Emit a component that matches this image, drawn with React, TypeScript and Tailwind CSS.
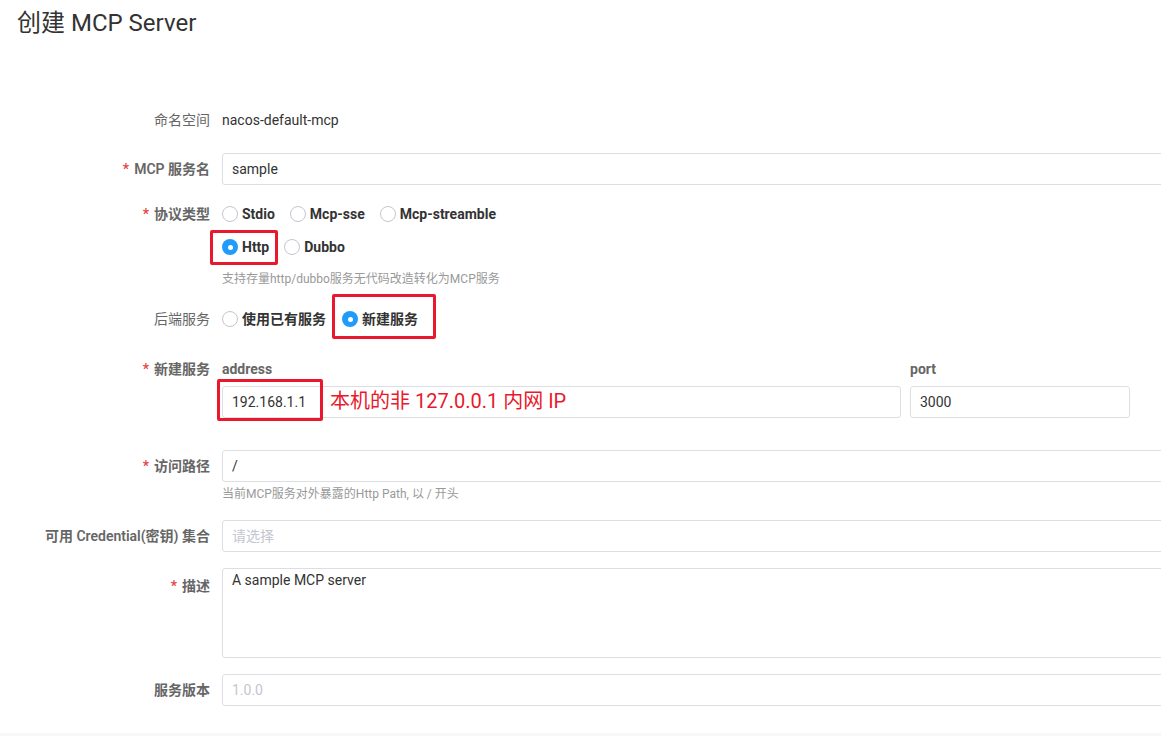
import React from "react";

const FONT = { fontFamily: 'Roboto, "Noto Sans CJK SC", sans-serif' };

function Req() {
  return <span className="text-[#e54545] mr-[5px]">*</span>;
}

function Label({ children, req, bold = true, top = false }: { children: React.ReactNode; req?: boolean; bold?: boolean; top?: boolean }) {
  return (
    <div
      className={`w-[210px] shrink-0 text-right text-[14px] text-[#666] ${bold ? "font-semibold" : "font-normal"} ${top ? "pt-[4px] leading-[28px]" : "flex items-center justify-end"}`}
    >
      {req && <Req />}
      {children}
    </div>
  );
}

function Radio({ checked, label, className = "" }: { checked?: boolean; label: string; className?: string }) {
  return (
    <div className={`flex items-center h-[28px] ${className}`}>
      {checked ? (
        <span className="w-[16px] h-[16px] rounded-full bg-[#209bfa] flex items-center justify-center">
          <span className="w-[5px] h-[5px] rounded-full bg-white" />
        </span>
      ) : (
        <span className="w-[16px] h-[16px] rounded-full border border-[#c4c6cf] bg-white" />
      )}
      <span className="ml-[4px] text-[14px] font-bold text-[#333]">{label}</span>
    </div>
  );
}

function Input({ value, placeholder, className = "w-[1000px]" }: { value?: string; placeholder?: string; className?: string }) {
  return (
    <div className={`h-[32px] border border-[#dcdee3] rounded-[3px] px-[9px] flex items-center text-[14px] bg-white ${className}`}>
      {value ? <span className="text-[#333]">{value}</span> : <span className="text-[#c4c6cf]">{placeholder}</span>}
    </div>
  );
}

export default function App() {
  return (
    <div className="w-[1161px] h-[736px] overflow-hidden bg-white relative" style={FONT}>
      <h1 className="pl-[17px] pt-[8px] text-[24px] leading-[30px] text-[#333] font-normal">
        创建 MCP Server
      </h1>

      {/* 命名空间 */}
      <div className="flex mt-[66px] h-[32px]">
        <Label bold={false}>命名空间</Label>
        <div className="ml-[12px] flex items-center text-[14px] text-[#333]">nacos-default-mcp</div>
      </div>

      {/* MCP 服务名 */}
      <div className="flex mt-[17px]">
        <Label req>MCP 服务名</Label>
        <div className="ml-[12px]">
          <Input value="sample" />
        </div>
      </div>

      {/* 协议类型 */}
      <div className="flex mt-[15px]">
        <div className="w-[210px] shrink-0 text-right text-[14px] text-[#666] font-semibold h-[28px] flex items-center justify-end">
          <Req />
          协议类型
        </div>
        <div className="ml-[12px]">
          <div className="flex">
            <Radio label="Stdio" className="mr-[15px]" />
            <Radio label="Mcp-sse" className="mr-[15px]" />
            <Radio label="Mcp-streamble" />
          </div>
          <div className="flex mt-[5px]">
            <div className="relative mr-[15px]">
              <Radio checked label="Http" />
              <span className="absolute left-[-12px] top-[-3px] w-[68px] h-[35px] border-[3px] border-[#e8192c] rounded-[2px]" />
            </div>
            <Radio label="Dubbo" />
          </div>
          <div className="mt-[9px] text-[12px] leading-[18px] text-[#999]">支持存量http/dubbo服务无代码改造转化为MCP服务</div>
        </div>
      </div>

      {/* 后端服务 */}
      <div className="flex mt-[17px]">
        <div className="w-[210px] shrink-0 text-right text-[14px] text-[#666] h-[28px] flex items-center justify-end">后端服务</div>
        <div className="ml-[12px] flex">
          <Radio label="使用已有服务" className="mr-[16px]" />
          <div className="relative">
            <Radio checked label="新建服务" />
            <span className="absolute left-[-10px] top-[-11px] w-[104px] h-[45px] border-[3px] border-[#e8192c] rounded-[2px]" />
          </div>
        </div>
      </div>

      {/* 新建服务 */}
      <div className="flex mt-[26px]">
        <div className="w-[210px] shrink-0 text-right text-[14px] text-[#666] font-semibold h-[20px] flex items-center justify-end">
          <Req />
          新建服务
        </div>
        <div className="ml-[12px] flex gap-[9px]">
          <div className="w-[679px]">
            <div className="h-[20px] flex items-center text-[14px] font-bold text-[#666]">address</div>
            <div className="relative mt-[7px]">
              <Input value="192.168.1.1" className="w-[679px]" />
              <span className="absolute left-[-5px] top-[-7px] w-[106px] h-[42px] border-[3px] border-[#e8192c] rounded-[2px]" />
              <span className="absolute left-[108px] top-[1px] text-[20px] leading-[28px] text-[#e8192c] whitespace-nowrap">本机的非 127.0.0.1 内网 IP</span>
            </div>
          </div>
          <div className="w-[220px]">
            <div className="h-[20px] flex items-center text-[14px] font-bold text-[#666]">port</div>
            <div className="mt-[7px]">
              <Input value="3000" className="w-[220px]" />
            </div>
          </div>
        </div>
      </div>

      {/* 访问路径 */}
      <div className="flex mt-[32px]">
        <div className="w-[210px] shrink-0 text-right text-[14px] text-[#666] font-semibold h-[32px] flex items-center justify-end">
          <Req />
          访问路径
        </div>
        <div className="ml-[12px]">
          <Input value="/" />
          <div className="mt-[3px] text-[12px] leading-[18px] text-[#999]">当前MCP服务对外暴露的Http Path, 以 / 开头</div>
        </div>
      </div>

      {/* Credential */}
      <div className="flex mt-[17px]">
        <Label>可用 Credential(密钥) 集合</Label>
        <div className="ml-[12px]">
          <Input placeholder="请选择" />
        </div>
      </div>

      {/* 描述 */}
      <div className="flex mt-[16px]">
        <Label req top>
          描述
        </Label>
        <div className="ml-[12px]">
          <div className="w-[1000px] h-[90px] border border-[#dcdee3] rounded-[3px] px-[9px] pt-[1px] text-[14px] leading-[20px] text-[#333]">
            A sample MCP server
          </div>
        </div>
      </div>

      {/* 服务版本 */}
      <div className="flex mt-[16px]">
        <Label>服务版本</Label>
        <div className="ml-[12px]">
          <Input placeholder="1.0.0" />
        </div>
      </div>

      <div className="absolute left-0 right-0 bottom-0 h-[3px] bg-[#f8f8f8]" />
    </div>
  );
}
